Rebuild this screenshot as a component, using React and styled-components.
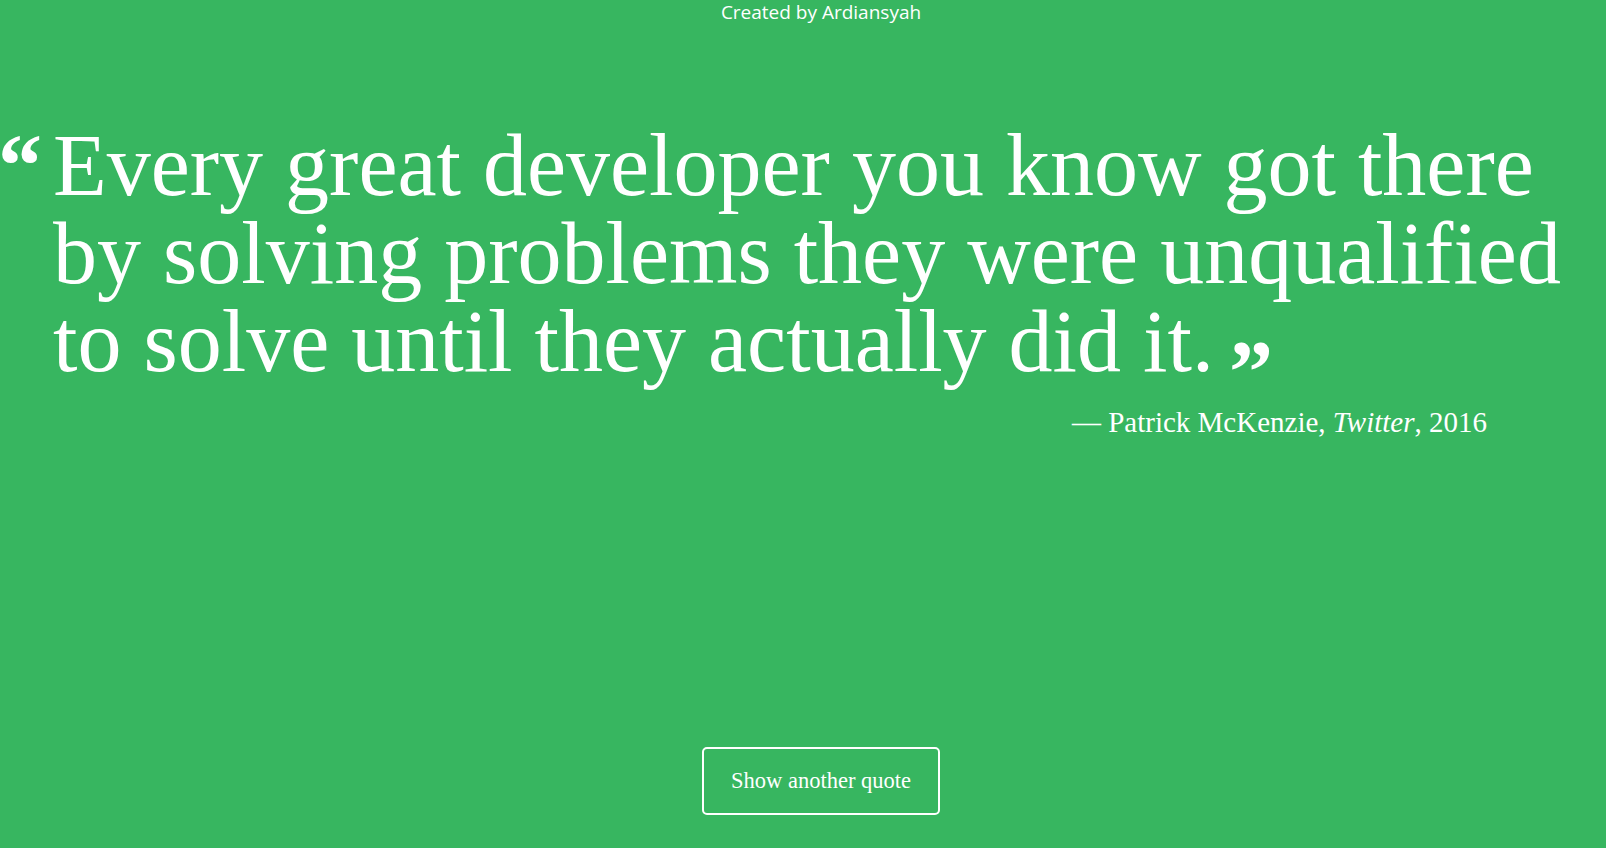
import styled, { createGlobalStyle } from "styled-components";

const GlobalStyle = createGlobalStyle`
  html, body {
    margin: 0;
    padding: 0;
    background: #37b660;
    overflow: hidden;
  }
`;

const Page = styled.div`
  min-height: 100vh;
  display: flex;
  flex-direction: column;
  background: #37b660;
  color: #fff;
  font-family: "Liberation Serif", "Times New Roman", serif;
`;

const Header = styled.header`
  padding-left: 36px;
  text-align: center;
  font-family: "Open Sans", "Noto Sans", sans-serif;
  font-size: 19px;
  line-height: 25px;
`;

const Quote = styled.blockquote`
  display: flex;
  margin: 97px 0 0 -2px;
  font-size: 88px;
  line-height: 88px;
`;

const OpenMark = styled.span`
  flex: 0 0 55px;
  font-weight: 700;
`;

const Text = styled.p`
  margin: 0;
  width: 1540px;
`;

const CloseMark = styled.span`
  margin-left: -7px;
  font-weight: 700;
  line-height: 0;
  vertical-align: -30px;
`;

const Cite = styled.p`
  margin: 18px 0 0;
  padding-right: 119px;
  text-align: right;
  font-size: 29px;
  line-height: 36px;

  em {
    font-style: italic;
  }
`;

const Footer = styled.footer`
  margin-top: auto;
  padding: 0 0 33px 36px;
  display: flex;
  justify-content: center;
`;

const Button = styled.button`
  width: 238px;
  height: 68px;
  background: transparent;
  border: 2px solid #fff;
  border-radius: 5px;
  color: #fff;
  font-family: "Liberation Serif", "Times New Roman", serif;
  font-size: 22.5px;
  cursor: pointer;
`;

export default function App() {
  return (
    <Page>
      <GlobalStyle />
      <Header>Created by Ardiansyah</Header>
      <Quote>
        <OpenMark>“</OpenMark>
        <Text>
          Every great developer you know got there by solving problems they
          were unqualified to solve until they actually did it.{" "}
          <CloseMark>”</CloseMark>
        </Text>
      </Quote>
      <Cite>
        — Patrick McKenzie, <em>Twitter</em>, 2016
      </Cite>
      <Footer>
        <Button type="button">Show another quote</Button>
      </Footer>
    </Page>
  );
}
